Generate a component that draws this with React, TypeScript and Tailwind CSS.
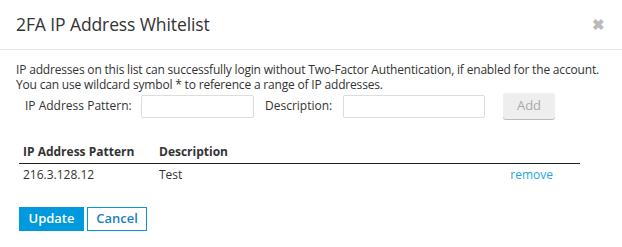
export default function App() {
  return (
    <div
      className="h-[247px] w-[622px] bg-white text-[#333]"
      style={{ fontFamily: '"Open Sans", sans-serif' }}
    >
      <div className="flex h-[50px] items-center justify-between border-b border-[#e5e5e5] pl-4 pr-4">
        <h4 className="text-[17.5px] leading-none tracking-[-0.1px] text-[#333]">2FA IP Address Whitelist</h4>
        <button className="pr-[1px] text-[15px] font-bold leading-none text-[#bbb]" type="button">
          ✖
        </button>
      </div>

      <div className="px-4 pt-[12px] text-[12px]">
        <p className="whitespace-nowrap leading-[15px] tracking-[-0.18px]">
          IP addresses on this list can successfully login without Two-Factor Authentication, if
          enabled for the account.
          <br />
          You can use wildcard symbol * to reference a range of IP addresses.
        </p>

        <div className="mt-[1px] flex items-center pl-[9px]">
          <label className="w-[116px]">IP Address Pattern:</label>
          <input className="h-[23px] w-[113px] rounded-[2px] border border-[#ddd] px-1" type="text" />
          <label className="ml-[11px] w-[78px]">Description:</label>
          <input className="h-[23px] w-[142px] rounded-[2px] border border-[#ddd] px-1" type="text" />
          <button
            className="ml-[18px] h-[26px] w-[52px] rounded-[3px] bg-[#eee] text-[13px] text-[#aaa] shadow-[0_1px_0_#bbb]"
            disabled
            type="button"
          >
            Add
          </button>
        </div>

        <table className="mt-[24px] ml-[3px] w-[561px] border-collapse text-[12px]">
          <thead>
            <tr className="border-b border-[#222]">
              <th className="w-[140px] pb-[2px] pl-[4px] text-left font-bold">IP Address Pattern</th>
              <th className="pb-[2px] text-left font-bold">Description</th>
              <th />
            </tr>
          </thead>
          <tbody>
            <tr>
              <td className="pl-[4px] pt-[2px]">216.3.128.12</td>
              <td className="pt-[2px]">Test</td>
              <td className="pr-[27px] pt-[2px] text-right">
                <a className="text-[#22a7e0]" href="#">
                  remove
                </a>
              </td>
            </tr>
          </tbody>
        </table>

        <div className="mt-[23px] ml-[3px] flex gap-[3px]">
          <button className="h-[24px] w-[65px] bg-[#0099dd] text-[13px] font-semibold text-white" type="button">
            Update
          </button>
          <button
            className="h-[24px] w-[60px] border border-[#0099dd] bg-white text-[13px] font-semibold text-[#1a7fbf]"
            type="button"
          >
            Cancel
          </button>
        </div>
      </div>
    </div>
  );
}
